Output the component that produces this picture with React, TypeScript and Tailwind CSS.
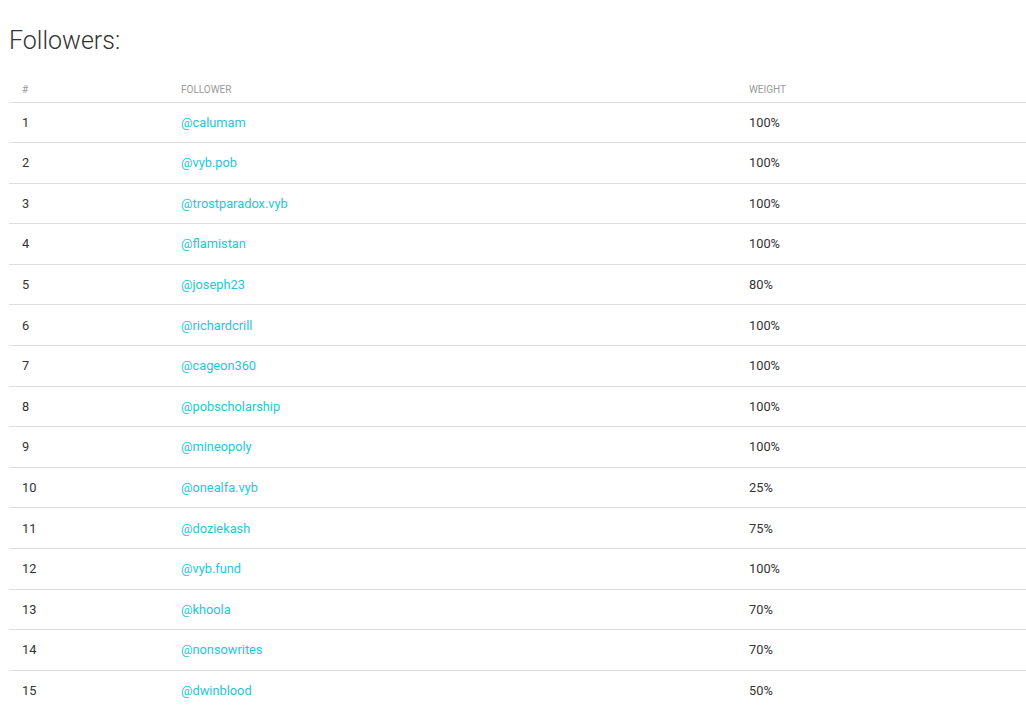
const followers: [string, string][] = [
  ["@calumam", "100%"],
  ["@vyb.pob", "100%"],
  ["@trostparadox.vyb", "100%"],
  ["@flamistan", "100%"],
  ["@joseph23", "80%"],
  ["@richardcrill", "100%"],
  ["@cageon360", "100%"],
  ["@pobscholarship", "100%"],
  ["@mineopoly", "100%"],
  ["@onealfa.vyb", "25%"],
  ["@doziekash", "75%"],
  ["@vyb.fund", "100%"],
  ["@khoola", "70%"],
  ["@nonsowrites", "70%"],
  ["@dwinblood", "50%"],
];

export default function App() {
  return (
    <div
      className="bg-white pl-[9px] h-[718px] overflow-hidden"
      style={{ fontFamily: "Roboto, 'Liberation Sans', sans-serif" }}
    >
      <h1 className="pt-[26px] text-[25px] leading-[30px] font-light text-[#333]">
        Followers:
      </h1>
      <table className="mt-[20px] w-[1017px] border-collapse text-left">
        <thead>
          <tr className="h-[26px] border-b border-[#ddd] text-[10px] uppercase text-[#999]">
            <th className="w-[159px] pl-[13px] pt-[1px] font-normal">#</th>
            <th className="w-[568px] pl-[13px] pt-[1px] font-normal">Follower</th>
            <th className="pl-[13px] pt-[1px] font-normal">Weight</th>
          </tr>
        </thead>
        <tbody className="text-[12.8px] text-[#333]">
          {followers.map(([name, weight], i) => (
            <tr
              key={name}
              className={
                i === followers.length - 1
                  ? "h-[40.6px]"
                  : "h-[40.6px] border-b border-[#ddd]"
              }
            >
              <td className="pl-[13px]">{i + 1}</td>
              <td className="pl-[13px]">
                <a className="text-[#26c6da]" href="#">
                  {name}
                </a>
              </td>
              <td className="pl-[13px]">{weight}</td>
            </tr>
          ))}
        </tbody>
      </table>
    </div>
  );
}
